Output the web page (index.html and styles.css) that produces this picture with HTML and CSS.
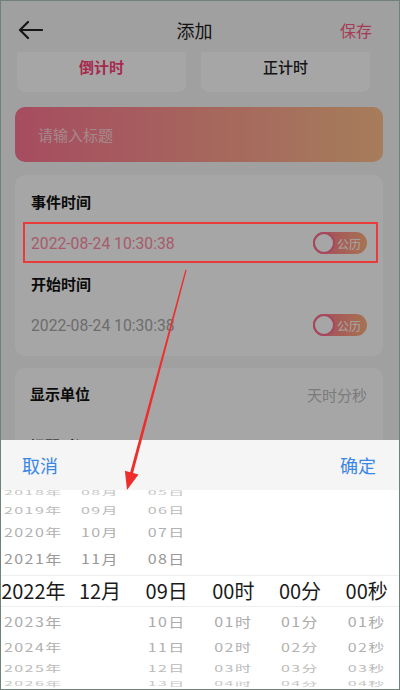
FILE: index.html
```html
<!DOCTYPE html>
<html lang="zh-CN">
<head>
    <meta charset="UTF-8">
    <meta name="viewport" content="width=device-width, initial-scale=1.0">
    <title>添加</title>
    <link rel="stylesheet" href="styles.css">
</head>
<body>

    <div class="page">
        <div class="topbar">
            <svg class="back" width="26" height="20" viewBox="0 0 26 20">
                <path d="M25 10H3M11 2L3 10l8 8" fill="none" stroke="#222" stroke-width="2.2" stroke-linecap="round" stroke-linejoin="round"/>
            </svg>
            <div class="title">添加</div>
            <div class="save">保存</div>
        </div>

        <div class="tabs">
            <div class="tab active">倒计时</div>
            <div class="tab">正计时</div>
        </div>

        <div class="title-input">请输入标题</div>

        <div class="card">
            <div class="field-label">事件时间</div>
            <div class="field-row">
                <span class="date pink">2022-08-24 10:30:38</span>
                <span class="switch"><i class="knob"></i>公历</span>
            </div>
            <div class="field-label">开始时间</div>
            <div class="field-row">
                <span class="date">2022-08-24 10:30:38</span>
                <span class="switch"><i class="knob"></i>公历</span>
            </div>
        </div>

        <div class="card units">
            <div class="unit-row">
                <span class="field-label">显示单位</span>
                <span class="unit">天时分秒</span>
            </div>
            <div class="unit-row">
                <span class="field-label">提醒时间</span>
            </div>
        </div>
    </div>

    <div class="mask"></div>

    <div class="sheet">
        <div class="sheet-head">
            <span>取消</span>
            <span>确定</span>
        </div>
        <div class="wheel">
            <div class="row r4"><span>2018年</span><span>08月</span><span>05日</span><span></span><span></span><span></span></div>
            <div class="row r3"><span>2019年</span><span>09月</span><span>06日</span><span></span><span></span><span></span></div>
            <div class="row r2"><span>2020年</span><span>10月</span><span>07日</span><span></span><span></span><span></span></div>
            <div class="row r1 up"><span>2021年</span><span>11月</span><span>08日</span><span></span><span></span><span></span></div>
            <div class="row r0"><span>2022年</span><span>12月</span><span>09日</span><span>00时</span><span>00分</span><span>00秒</span></div>
            <div class="row r1 down"><span>2023年</span><span></span><span>10日</span><span>01时</span><span>01分</span><span>01秒</span></div>
            <div class="row r2 down"><span>2024年</span><span></span><span>11日</span><span>02时</span><span>02分</span><span>02秒</span></div>
            <div class="row r3 down"><span>2025年</span><span></span><span>12日</span><span>03时</span><span>03分</span><span>03秒</span></div>
            <div class="row r4 down"><span>2026年</span><span></span><span>13日</span><span>04时</span><span>04分</span><span>04秒</span></div>
        </div>
    </div>

    <!-- annotation drawn over the screenshot -->
    <div class="mark-box"></div>
    <svg class="mark-arrow" width="400" height="690" viewBox="0 0 400 690">
        <polygon points="185.4,269.8 186.6,270.2 133.1,473.0 138.5,474.4 127,490 124.9,470.8 130.2,472.2" fill="#ee2d2d"/>
    </svg>

    <div class="frame"></div>

</body>
</html>
```

FILE: styles.css
```css
body {
    margin: 0;
    width: 400px;
    height: 690px;
    overflow: hidden;
    font-family: "Noto Sans CJK SC", "Noto Sans", sans-serif;
    background: #f6f6f6;
    position: relative;
}

.page {
    height: 690px;
    background: #f6f6f6;
}

.topbar {
    height: 44px;
    padding: 8px 28px 0 17px;
    display: grid;
    grid-template-columns: 60px 1fr 60px;
    align-items: center;
}

.back {
    display: block;
}

.title {
    text-align: center;
    font-size: 18px;
    color: #1c1c1c;
}

.save {
    text-align: right;
    font-size: 16px;
    color: #ff5a86;
}

.tabs {
    display: grid;
    grid-template-columns: 1fr 1fr;
    gap: 15px;
    padding: 0 30px 0 17px;
}

.tab {
    height: 40px;
    line-height: 30px;
    text-align: center;
    font-size: 15px;
    font-weight: 500;
    color: #222;
    background: #ffffff;
    border-radius: 0 0 8px 8px;
}

.tab.active {
    color: #ff3f78;
    font-weight: bold;
}

.title-input {
    margin: 15px 17px 0 15px;
    height: 55px;
    line-height: 55px;
    padding-left: 23px;
    border-radius: 10px;
    background: linear-gradient(to right, #ff7694, #ffc08c);
    color: rgba(255, 255, 255, 0.65);
    font-size: 15px;
}

.card {
    margin: 13px 17px 0 15px;
    padding: 7px 16px 10px;
    background: #ffffff;
    border-radius: 10px;
}

.card.units {
    margin-top: 12px;
    padding: 0 16px 0 15px;
    height: 72px;
    overflow: hidden;
    border-radius: 10px 10px 0 0;
}

.field-label {
    display: block;
    margin-top: 10px;
    line-height: 20px;
    font-size: 15px;
    font-weight: bold;
    color: #111;
}

.field-row {
    margin-top: 10px;
    height: 42px;
    display: flex;
    align-items: center;
    justify-content: space-between;
}

.date {
    font-family: Roboto, "Noto Sans CJK SC", sans-serif;
    font-size: 15.7px;
    color: #a8a8a8;
}

.date.pink {
    color: #ff8ca6;
}

.switch {
    width: 54px;
    height: 22px;
    box-sizing: border-box;
    border-radius: 11px;
    background: linear-gradient(to right, #ff6f90, #ffb07e);
    display: flex;
    align-items: center;
    justify-content: space-between;
    padding: 0 6px 0 0;
    font-size: 12px;
    color: #ffffff;
}

.knob {
    width: 22px;
    height: 22px;
    box-sizing: border-box;
    border: 2px solid #ff6f90;
    border-radius: 50%;
    background: #ffffff;
}

.unit-row {
    height: 52px;
    display: flex;
    align-items: center;
    justify-content: space-between;
}

.unit-row + .unit-row {
    align-items: flex-start;
    height: 20px;
    padding-top: 16px;
}

.unit-row .field-label {
    margin-top: 0;
}

.unit {
    font-size: 15px;
    color: #bdbdbd;
}

.mask {
    position: absolute;
    inset: 0;
    background: rgba(0, 0, 0, 0.35);
    z-index: 1;
}

.sheet {
    position: absolute;
    left: 0;
    right: 0;
    bottom: 0;
    height: 250px;
    background: #ffffff;
    z-index: 2;
}

.sheet-head {
    height: 50px;
    padding: 0 24px 0 22px;
    background: #f5f5f5;
    display: flex;
    align-items: center;
    justify-content: space-between;
    font-size: 18px;
    color: #3a86e6;
}

.wheel {
    height: 200px;
    overflow: hidden;
}

.row {
    display: grid;
    grid-template-columns: repeat(6, 1fr);
    text-align: center;
    font-size: 16px;
    letter-spacing: 1.4px;
    color: #a3a3a3;
    white-space: nowrap;
}

.row span {
    display: block;
}

.r4 {
    height: 14px;
    line-height: 14px;
    color: #c6c6c6;
}

.r4 span {
    transform: scaleY(0.35);
}

.wheel .r4:first-child {
    margin-top: -4px;
}

.r3 {
    height: 20px;
    line-height: 20px;
    color: #bbbbbb;
}

.r3 span {
    transform: scaleY(0.55);
}

.r2 {
    height: 24px;
    line-height: 24px;
    color: #b0b0b0;
}

.r2 span {
    transform: scaleY(0.72);
}

.r1 {
    height: 31px;
    line-height: 29px;
    color: #999999;
}

.r1.down {
    height: 28px;
    line-height: 28px;
    color: #ababab;
}

.r1 span {
    transform: scaleY(0.8);
}

.r2.down {
    height: 24px;
    line-height: 24px;
}

.r3.down {
    height: 18px;
    line-height: 18px;
}

.r0 {
    height: 32px;
    line-height: 30px;
    font-size: 20px;
    letter-spacing: 0;
    color: #1a1a1a;
    border-top: 1px solid #eeeeee;
    border-bottom: 1px solid #eeeeee;
    box-sizing: border-box;
}

.mark-box {
    position: absolute;
    left: 23px;
    top: 222px;
    width: 351px;
    height: 37px;
    border: 2px solid #ea3a3a;
    z-index: 3;
}

.mark-arrow {
    position: absolute;
    left: 0;
    top: 0;
    z-index: 4;
}

.frame {
    position: absolute;
    inset: 0;
    border: 1px solid #70817a;
    z-index: 5;
    pointer-events: none;
}
```
